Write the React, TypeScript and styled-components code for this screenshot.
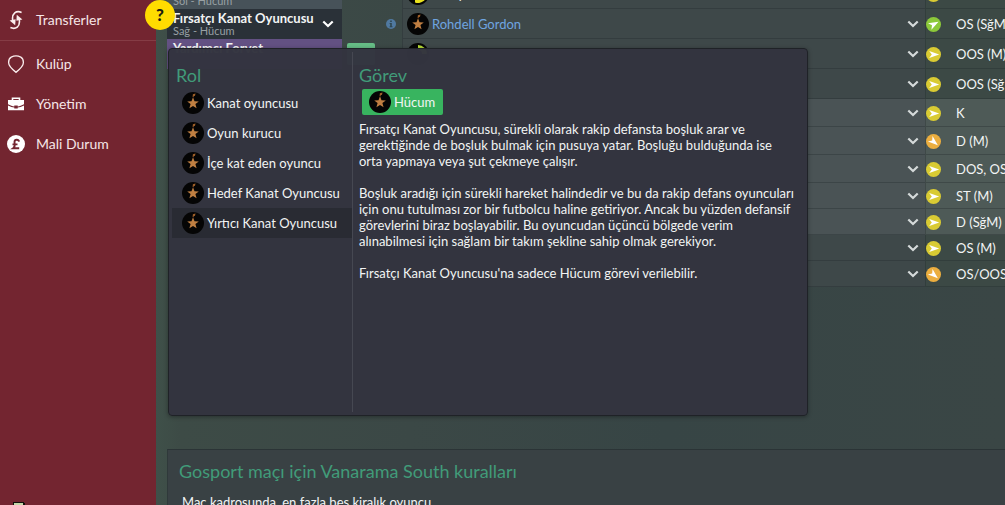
import React from 'react';
import styled, { createGlobalStyle } from 'styled-components';

const Global = createGlobalStyle`
  *, *::before, *::after { box-sizing: border-box; }
  html, body { margin: 0; height: 100%; overflow: hidden; }
  body {
    font: 13px/16px Lato, 'Liberation Sans', sans-serif;
    color: #f2f4f4;
    background: #394645;
  }
  #root { height: 100%; }
  button { font: inherit; color: inherit; border: 0; background: none; padding: 0; cursor: pointer; }
`;

const Page = styled.div`
  position: relative;
  display: flex;
  height: 100vh;
  overflow: hidden;
`;

const Sidebar = styled.nav`
  width: 156px;
  flex: none;
  display: flex;
  flex-direction: column;
  background: #732530;
`;

const NavGroup = styled.div<{ $ruled?: boolean }>`
  padding-bottom: ${p => (p.$ruled ? 0 : 3)}px;
  border-bottom: ${p => (p.$ruled ? '1px solid #853c45' : '0')};
  margin-bottom: ${p => (p.$ruled ? 3 : 0)}px;
`;

const NavLink = styled.a`
  display: flex;
  align-items: center;
  gap: 10px;
  height: 40px;
  padding-left: 6px;
  font-size: 14px;
  color: #f6e6e7;
  text-decoration: none;
  svg { flex: none; }
`;

const SidebarFoot = styled.div`
  display: flex;
  margin-top: auto;
  padding-left: 13px;
`;

const Main = styled.main`
  flex: 1;
  min-width: 0;
  display: flex;
  flex-direction: column;
  padding-left: 11px;
  background: linear-gradient(90deg, #3f5049 0, #3d4b46 24px, #3b4846 30%, #374545 60%, #3a4645 100%);
`;

const Squad = styled.table`
  width: 100%;
  table-layout: fixed;
  border-collapse: collapse;
  margin-bottom: 162px;
`;

const Row = styled.tr<{ $height: number }>`
  height: ${p => p.$height}px;
`;

const Cell = styled.td<{ $tone: 'none' | 'plain' | 'light'; $side?: boolean }>`
  padding: 0;
  background: ${p =>
    p.$tone === 'none' ? 'transparent' : p.$tone === 'light' ? (p.$side ? '#4e5a57' : '#4a5355') : p.$side ? '#3c4945' : '#3e4849'};
  box-shadow: ${p => (p.$tone === 'none' ? 'none' : 'inset 1px -1px 0 rgba(30, 38, 40, 0.3)')};
`;

const RoleCell = styled.td`
  padding: 0;
`;

const Clip = styled.div<{ $height: number; $end?: boolean }>`
  display: flex;
  align-items: ${p => (p.$end ? 'flex-end' : 'center')};
  height: ${p => p.$height}px;
  overflow: hidden;
`;

const RoleButton = styled.button<{ $bg: string }>`
  display: flex;
  flex: none;
  align-items: center;
  justify-content: space-between;
  width: 100%;
  height: 30px;
  padding: 0 8px 0 6px;
  text-align: left;
  background: ${p => p.$bg};
`;

const RoleText = styled.span`
  display: flex;
  flex-direction: column;
  b { line-height: 14px; white-space: nowrap; }
  small { font-size: 11px; line-height: 12px; color: #98a0a4; }
`;

const InfoLine = styled.div`
  display: flex;
  align-items: center;
  justify-content: space-between;
  padding: 0 6px 0 5px;
  svg { margin-left: auto; }
`;

const StatusPill = styled.span`
  width: 28px;
  height: 22px;
  border-radius: 2px;
  background: #66bd86;
`;

const PlayerLine = styled.div`
  display: flex;
  flex: 1;
  align-items: center;
  gap: 3px;
  height: 30px;
  padding: 0 6px 0 5px;
`;

const PlayerName = styled.a`
  color: #6fa5e0;
  text-decoration: none;
`;

const PlainName = styled.span`
  color: #f2f4f4;
`;

const Pusher = styled.span`
  margin-left: auto;
  display: flex;
`;

const PositionLine = styled.div`
  display: flex;
  flex: 1;
  align-items: center;
  gap: 15px;
  height: 30px;
  padding-left: 1px;
  white-space: nowrap;
  svg { flex: none; }
`;

const Rules = styled.section`
  flex: 1 0 auto;
  padding: 9px 11px;
  border-top: 1px solid #2b3436;
  border-left: 1px solid #2f393a;
  background: #394144;
`;

const Title = styled.h2`
  margin: 0;
  font-size: 18px;
  line-height: 24px;
  font-weight: 400;
  color: #419b79;
`;

const RulesText = styled.p`
  margin: 11px 0 0 3px;
`;

const Help = styled.button`
  && {
    position: absolute;
    left: 145px;
    top: 0;
    width: 30px;
    height: 30px;
    border-radius: 50%;
    background: #ffdc00;
    color: #1c1a10;
    font-weight: 900;
    font-size: 17px;
  }
`;

const Popup = styled.div`
  position: absolute;
  left: 168px;
  top: 48px;
  width: 640px;
  min-height: 368px;
  display: flex;
  padding: 3px;
  border: 1px solid #1f2227;
  border-radius: 4px;
  background: rgba(51, 52, 63, 0.98);
  box-shadow: 0 1px 4px rgba(0, 0, 0, 0.35);
`;

const RoleList = styled.div`
  width: 181px;
  flex: none;
  padding-top: 11px;
  border-right: 1px solid #464852;
  ${Title} { padding-left: 4px; margin-bottom: 1px; }
`;

const RoleOption = styled.button<{ $active?: boolean }>`
  && {
    display: flex;
    align-items: center;
    gap: 3px;
    width: 100%;
    height: 30px;
    padding-left: 10px;
    white-space: nowrap;
    background: ${p => (p.$active ? '#292b33' : 'transparent')};
  }
`;

const Duty = styled.div`
  flex: 1;
  padding: 11px 6px;
`;

const DutyButton = styled.button`
  && {
    display: flex;
    align-items: center;
    gap: 3px;
    height: 26px;
    margin: 2px 0 6px 3px;
    padding: 0 8px 0 7px;
    border-radius: 2px;
    background: #38b45f;
  }
`;

const Copy = styled.p`
  margin: 0 0 16px;
  white-space: pre;
`;

const Star = () => (
  <svg width="22" height="22" viewBox="0 0 22 22">
    <circle cx="11" cy="11" r="11" fill="#050505" />
    <path d="M11 5.300l1.500 4 4.300.2-3.400 2.600 1.200 4.100-3.600-2.300-3.600 2.300 1.200-4.100-3.400-2.600 4.300-.2z" fill="#c07f42" />
    <path d="M10.600 4.800l.3-2.600 2.600-.6-.5 2.200-1.300.4-.3 1.300z" fill="#a0602a" />
  </svg>
);

const Dial = ({ low }: { low?: boolean }) => (
  <svg width="22" height="22" viewBox="0 0 22 22">
    <circle cx="11" cy="11" r="11" fill="#050505" />
    <path
      d={low ? 'M8 15.500v4a9 9 0 0 0 12-8.500h-5a4 4 0 0 1-4 4z' : 'M11 7V2a9 9 0 0 1 9 9h-5a4 4 0 0 0-4-4z'}
      fill={low ? '#e9e11c' : '#b6dc35'}
    />
  </svg>
);

const Chevron = ({ color = '#d5dada' }: { color?: string }) => (
  <svg width="12" height="12" viewBox="0 0 12 12" fill="none" stroke={color} strokeWidth="2.200">
    <path d="M1.300 3.500L6 8 10.700 3.500" />
  </svg>
);

const ARROW = { green: -28, yellow: 0, orange: 40 };
const DISC = { green: '#8cc93a', yellow: '#d9cb33', orange: '#ecae3f' };
type Mood = keyof typeof ARROW;

const Morale = ({ mood }: { mood: Mood }) => (
  <svg width="15" height="15" viewBox="0 0 15 15">
    <circle cx="7.5" cy="7.5" r="7.5" fill={DISC[mood]} />
    <path d="M3.200 3.900L13.200 7.500 3.200 11.100 5.800 7.500z" fill="#fff" transform={`rotate(${ARROW[mood]} 7.5 7.5)`} />
  </svg>
);

const InfoIcon = () => (
  <svg width="10" height="10" viewBox="0 0 10 10">
    <circle cx="5" cy="5" r="5" fill="#5079a0" />
    <path d="M4.2 1.6h1.6v1.5H4.2zM3.6 4.1h2.2v3.2h.7v1H3.6v-1h.6V5.1h-.6z" fill="#2f4650" />
  </svg>
);

const TransferIcon = () => (
  <svg width="20" height="20" viewBox="0 0 20 20">
    {[0, 180].map(turn => (
      <g key={turn} transform={`rotate(${turn} 10 10)`}>
        <path d="M15.600 2.400C10.300 .2 5.600 3.300 6.700 10.500" fill="none" stroke="#fbeeee" strokeWidth="1.600" />
        <path d="M3.600 10.600L9.600 9.200 9.200 15.200z" fill="#fbeeee" />
      </g>
    ))}
  </svg>
);

const ClubIcon = () => (
  <svg width="20" height="20" viewBox="0 0 20 20" fill="none" stroke="#fbeeee" strokeWidth="1.300">
    <path d="M10 18.300C7.500 16.300 2.600 12.500 2.600 8.500c0-2.600 1-4.500 2.600-5.400 2.900-1.400 6.700-1.400 9.600 0 1.600.9 2.600 2.800 2.600 5.400 0 4-4.900 7.800-7.400 9.800z" />
  </svg>
);

const CaseIcon = () => (
  <svg width="20" height="20" viewBox="0 0 20 20">
    <path d="M6.500 6V4.200h7V6" fill="none" stroke="#fff" strokeWidth="1.600" />
    <path d="M2 6h16v4.200c-2.300 1.300-4.600 2-6.300 2.200v-1H8.300v1C6.600 12.200 4.300 11.500 2 10.200z" fill="#fff" />
    <path d="M2 11.500c2.300 1.200 4.500 1.900 6.300 2.100v.9h3.400v-.9c1.800-.2 4-.9 6.300-2.100v4.800H2z" fill="#fff" />
  </svg>
);

const MoneyIcon = () => (
  <svg width="20" height="20" viewBox="0 0 20 20">
    <circle cx="10" cy="10" r="9" fill="#fff" />
    <path
      d="M13 7.600C12.600 5 8.600 5 8.500 8c0 2 1.200 4.500-1.300 6.200h6M6.500 10.400h5"
      fill="none"
      stroke="#732530"
      strokeWidth="1.900"
    />
  </svg>
);

const roles = ['Kanat oyuncusu', 'Oyun kurucu', 'İçe kat eden oyuncu', 'Hedef Kanat Oyuncusu', 'Yırtıcı Kanat Oyuncusu'];

const players: { height: number; mood: Mood; positions: string; light?: boolean }[] = [
  { height: 9, mood: 'yellow', positions: 'OS/OOS (' },
  { height: 30, mood: 'green', positions: 'OS (SğM' },
  { height: 30, mood: 'yellow', positions: 'OOS (M),' },
  { height: 30, mood: 'yellow', positions: 'OOS (Sğ' },
  { height: 28, mood: 'yellow', positions: 'K', light: true },
  { height: 28, mood: 'orange', positions: 'D (M)', light: true },
  { height: 28, mood: 'yellow', positions: 'DOS, OS', light: true },
  { height: 26, mood: 'yellow', positions: 'ST (M)', light: true },
  { height: 26, mood: 'yellow', positions: 'D (SğM)', light: true },
  { height: 26, mood: 'yellow', positions: 'OS (M)' },
  { height: 26, mood: 'orange', positions: 'OS/OOS' },
];

const RoleSlot = ({ index }: { index: number }) => {
  if (index === 0)
    return (
      <RoleButton $bg="#475259">
        <RoleText><b>&nbsp;</b><small>Sol - Hücum</small></RoleText>
      </RoleButton>
    );
  if (index === 1)
    return (
      <RoleButton $bg="#2a3138">
        <RoleText><b>Fırsatçı Kanat Oyuncusu</b><small>Sağ - Hücum</small></RoleText>
        <Chevron color="#fff" />
      </RoleButton>
    );
  if (index === 2)
    return (
      <RoleButton $bg="#635183">
        <RoleText><b>Yardımcı Forvet</b><small>&nbsp;</small></RoleText>
      </RoleButton>
    );
  return null;
};

export default function App() {
  return (
    <Page>
      <Global />
      <Sidebar>
        <NavGroup $ruled>
          <NavLink href="#transferler"><TransferIcon />Transferler</NavLink>
        </NavGroup>
        <NavGroup>
          <NavLink href="#kulup"><ClubIcon />Kulüp</NavLink>
          <NavLink href="#yonetim"><CaseIcon />Yönetim</NavLink>
          <NavLink href="#mali"><MoneyIcon />Mali Durum</NavLink>
        </NavGroup>
        <SidebarFoot>
          <svg width="13" height="3" viewBox="0 0 13 3">
            <path d="M0 0h11v1h1v2H0z" fill="#10100c" />
            <path d="M1 1h9v2H1z" fill="#c4d6a8" />
          </svg>
        </SidebarFoot>
      </Sidebar>

      <Main>
        <Squad>
          <colgroup>
            <col style={{ width: 175 }} />
            <col style={{ width: 60 }} />
            <col />
            <col style={{ width: 80 }} />
          </colgroup>
          <tbody>
            {players.map((p, i) => {
              const tone = p.light ? 'light' : 'plain';
              return (
                <Row key={i} $height={p.height}>
                  <RoleCell>
                    <Clip $height={p.height} $end={i === 0}><RoleSlot index={i} /></Clip>
                  </RoleCell>
                  <Cell $tone="none">
                    <InfoLine>
                      {i === 2 && <StatusPill />}
                      {i === 1 && <InfoIcon />}
                    </InfoLine>
                  </Cell>
                  <Cell $tone={tone}>
                    <Clip $height={p.height} $end={i === 0}>
                      <PlayerLine>
                        {i === 0 && <><Dial low /><PlainName>Harry</PlainName></>}
                        {i === 1 && <><Star /><PlayerName href="#gordon">Rohdell Gordon</PlayerName></>}
                        {i === 2 && <Dial />}
                        <Pusher><Chevron /></Pusher>
                      </PlayerLine>
                    </Clip>
                  </Cell>
                  <Cell $tone={tone} $side>
                    <Clip $height={p.height} $end={i === 0}>
                      <PositionLine><Morale mood={p.mood} />{p.positions}</PositionLine>
                    </Clip>
                  </Cell>
                </Row>
              );
            })}
          </tbody>
        </Squad>
        <Rules>
          <Title>Gosport maçı için Vanarama South kuralları</Title>
          <RulesText>Maç kadrosunda, en fazla beş kiralık oyuncu</RulesText>
        </Rules>
      </Main>

      <Popup role="dialog" aria-label="Rol">
        <RoleList>
          <Title>Rol</Title>
          {roles.map((r, i) => (
            <RoleOption key={r} $active={i === 4}><Star />{r}</RoleOption>
          ))}
        </RoleList>
        <Duty>
          <Title>Görev</Title>
          <DutyButton><Star />Hücum</DutyButton>
          <Copy>{`Fırsatçı Kanat Oyuncusu, sürekli olarak rakip defansta boşluk arar ve
gerektiğinde de boşluk bulmak için pusuya yatar. Boşluğu bulduğunda ise
orta yapmaya veya şut çekmeye çalışır.`}</Copy>
          <Copy>{`Boşluk aradığı için sürekli hareket halindedir ve bu da rakip defans oyuncuları
için onu tutulması zor bir futbolcu haline getiriyor. Ancak bu yüzden defansif
görevlerini biraz boşlayabilir. Bu oyuncudan üçüncü bölgede verim
alınabilmesi için sağlam bir takım şekline sahip olmak gerekiyor.`}</Copy>
          <Copy>Fırsatçı Kanat Oyuncusu'na sadece Hücum görevi verilebilir.</Copy>
        </Duty>
      </Popup>
      <Help aria-label="Yardım">?</Help>
    </Page>
  );
}
